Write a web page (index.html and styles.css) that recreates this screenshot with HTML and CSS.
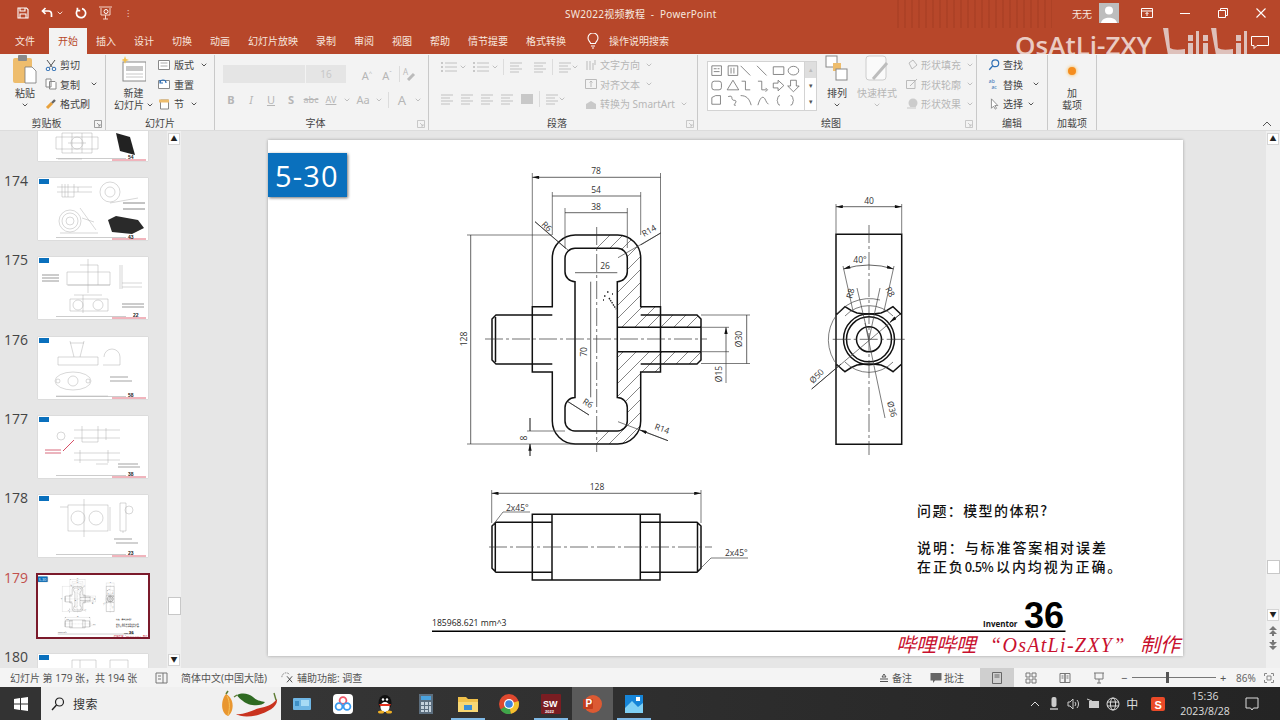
FILE: index.html
```html
<!DOCTYPE html>
<html lang="zh-CN">
<head>
<meta charset="utf-8">
<title>SW2022视频教程 - PowerPoint</title>
<link rel="stylesheet" href="styles.css">
</head>
<body>
<svg class="defs" width="0" height="0">
  <defs>
    <marker id="arr" viewBox="0 0 8 4" refX="8" refY="2" markerWidth="8" markerHeight="3.4" orient="auto-start-reverse" markerUnits="userSpaceOnUse"><path d="M0 0L8 2L0 4z" fill="#111"/></marker>
    <pattern id="hatch" width="13" height="13" patternUnits="userSpaceOnUse"><path d="M-1 14L14 -1" stroke="#333" stroke-width=".6"/></pattern>
    <symbol id="chev" viewBox="0 0 6 4"><path d="M.7 .7L3 3L5.3 .7" fill="none" stroke="currentColor" stroke-width="1"/></symbol>
    <symbol id="launch" viewBox="0 0 8 8"><path d="M.5 .5H7.5V7.5H.5ZM3 3L6 6M6 4V6H4" fill="none" stroke="#888" stroke-width=".8"/></symbol>
    <symbol id="bul" viewBox="0 0 20 12"><path d="M1 2h2M1 6h2M1 10h2" stroke="#bbb" stroke-width="1.4"/><path d="M5 2H17M5 6H17M5 10H17" stroke="#c2c2c2" stroke-width="1"/></symbol>
    <symbol id="alg" viewBox="0 0 14 12"><path d="M1 2H13M1 5H10M1 8H13M1 11H10" stroke="#c2c2c2" stroke-width="1.2"/></symbol>
    <g id="sheet">
      <rect x="268" y="140" width="915" height="516" fill="#fff"/>
      <rect class="badge-r" x="268" y="153" width="79" height="44" fill="#0a70bd"/>
      <text class="badge-t" x="275" y="187">5-30</text>

      <!-- front section -->
      <path fill="url(#hatch)" d="M597 235H617.7A23 23 0 0 1 640.7 258V306.7H660.5V315H697L701 319V327.3H617.3V281.7A10 10 0 0 0 627.3 271.7V258.3A10 10 0 0 0 617.3 248.3H597Z"/>
      <path fill="url(#hatch)" d="M597 444H617.7A23 23 0 0 0 640.7 421V372H660.5V364H697L701 360V351.7H617.3V397.6A10 10 0 0 1 627.3 407.6V421A10 10 0 0 1 617.3 431H597Z"/>
      <path class="thick" d="M552.3 258A23 23 0 0 1 575.3 235H617.7A23 23 0 0 1 640.7 258V306.7H660.5V315H697L701 319V360L697 364H660.5V372H640.7V421A23 23 0 0 1 617.7 444H575.3A23 23 0 0 1 552.3 421V372H532.3V364H496L492 360V319L496 315H532.3V306.7H552.3Z"/>
      <path class="thick" d="M565 258.3A10 10 0 0 1 575 248.3H617.3A10 10 0 0 1 627.3 258.3V271.7A10 10 0 0 1 617.3 281.7V397.6A10 10 0 0 1 627.3 407.6V421A10 10 0 0 1 617.3 431H575A10 10 0 0 1 565 421V407.6A10 10 0 0 1 575 397.6V281.7A10 10 0 0 1 565 271.7Z"/>
      <path class="thick" d="M617.3 327.3H701M617.3 351.7H701M532.3 315V364M532.3 315H552.3M532.3 364H552.3M640.7 315H660.5M640.7 364H660.5M660.5 315V364M495.5 317V362"/>
      <path class="center" d="M485 339H707M596.7 227V452"/>
      <!-- front dimensions -->
      <path class="thin" d="M532.3 173V306M660.5 173V306M552.3 192V235M640.7 192V235M565 208V248M627.3 208V248M467 235H552M467 444H575M701 315H750M701 363.5H750M701 327.3H729M701 351.7H729M527 431H565"/>
      <path class="dim" d="M532.3 177.3H660.5M552.3 196H640.7M565 212.7H627.3M470.7 235V444M575 272.7H617.3M590.7 281.7V397.3M746.7 315V363.5M726 351.7V327.3"/>
      <path class="thin" d="M726 351.7V383M530 418V431M530 444V456"/>
      <path class="thin" d="M535 221.7L568 250M618 257.7L660.7 233M589 415L568 401.7M618 421.7L668 440.7"/>
      <path class="dim-e" d="M535 221.7L566 248.7M660.7 233L640.7 245M589 415L568 401.7M668 440.7L640 430"/>
      <path class="dim-e" d="M530 418V431M530 456V444"/>
      <text class="dt" x="596" y="174" text-anchor="middle">78</text>
      <text class="dt" x="596" y="193" text-anchor="middle">54</text>
      <text class="dt" x="596" y="209.5" text-anchor="middle">38</text>
      <text class="dt" x="605" y="269" text-anchor="middle">26</text>
      <text class="dt" transform="translate(467 339) rotate(-90)" text-anchor="middle">128</text>
      <text class="dt" transform="translate(587 352) rotate(-90)" text-anchor="middle">70</text>
      <text class="dt" transform="translate(742 339) rotate(-90)" text-anchor="middle">Ø30</text>
      <text class="dt" transform="translate(722 374) rotate(-90)" text-anchor="middle">Ø15</text>
      <text class="dt" transform="translate(527 438) rotate(-90)" text-anchor="middle">8</text>
      <text class="dt" transform="translate(541 225) rotate(45)">R6</text>
      <text class="dt" transform="translate(644 237) rotate(-30)">R14</text>
      <text class="dt" transform="translate(582 403) rotate(33)">R6</text>
      <text class="dt" transform="translate(654 429) rotate(20)">R14</text>
      <!-- busy cursor -->
      <path d="M609 298l7 11M604 296h1.5M607 292h1.5M612 294h1M603 300h1" stroke="#222" stroke-width="1.4" stroke-dasharray="1.5 1"/>

      <!-- side view -->
      <path class="thick" d="M836 234.3H901.7V444.3H836ZM836 315L845 306.7Q851 311 857 313Q869 315 881 313Q887 311 893 306.7L901.7 315M836 364L845 371.7Q851 367 857 365Q869 363 881 365Q887 367 893 371.7L901.7 364"/>
      <circle class="thick" cx="869" cy="339.3" r="12.5"/>
      <circle class="thick" cx="869" cy="339.3" r="22.5"/>
      <circle class="thick" cx="869" cy="339.3" r="25.5"/>
      <path class="thin" d="M845 316A33 33 0 0 1 893 316M893 362A33 33 0 0 1 845 362M880 300A41 41 0 0 0 843 371M836 204V234M901.7 204V234"/>
      <path class="center" d="M869 225V455M832.7 339.3H907.3"/>
      <path class="dim" d="M836 206.7H901.7"/>
      <path class="thin" d="M843 266L853 311M894 266L884 311M857 288L869 339M880 288L869 339M811.7 389L900 314.3M865 323L885 418"/>
      <path class="dim" d="M843.5 269Q869 261 893.5 269"/>
      <path class="dim-e" d="M811.7 389L841 364M900 314.3L890 322"/>
      <text class="dt" x="869" y="203.5" text-anchor="middle">40</text>
      <text class="dt" x="860" y="262.5" text-anchor="middle">40°</text>
      <text class="dt" transform="translate(852 299) rotate(-75)">R8</text>
      <text class="dt" transform="translate(885 289) rotate(60)">R8</text>
      <text class="dt" transform="translate(813 384) rotate(-45)">Ø50</text>
      <text class="dt" transform="translate(887 402) rotate(75)">Ø36</text>

      <!-- bottom view -->
      <path class="thick" d="M532.3 514.3H660V580H532.3ZM552 514.3V580M640.3 514.3V580M532.3 522.3H552M532.3 572.3H552M640.3 522.3H660M640.3 572.3H660M532.3 522.3H496L492 526V568.3L496 572.3H532.3M660 522.3H697L701 526V568.3L697 572.3H660M495.3 522.3V572.3M697.5 522.3V572.3"/>
      <path class="center" d="M489 547H712"/>
      <path class="thin" d="M491.7 490V523M701 490V523M493 525L503 512H530M699 570L711 558H748"/>
      <path class="dim" d="M491.7 493.3H701"/>
      <text class="dt" x="597" y="490" text-anchor="middle">128</text>
      <text class="dt" x="506" y="510.5">2x45°</text>
      <text class="dt" x="725" y="555.5">2x45°</text>

      <!-- texts -->
      <text class="q" x="917" y="516">问题：模型的体积?</text>
      <text class="q wide" x="917" y="553">说明：与标准答案相对误差</text>
      <text class="q wide" x="917" y="572">在正负<tspan class="pct">0.5%</tspan><tspan x="996">以内均视为正确。</tspan></text>
      <text class="vol" x="432" y="626">185968.621 mm^3</text>
      <path d="M432 631.3H1065.5" stroke="#000" stroke-width="1.6"/>
      <text class="inv" x="983" y="627">Inventor</text>
      <text class="score" x="1024" y="628">36</text>
      <text class="red" y="652"><tspan x="896">哔哩哔哩</tspan><tspan class="red-l" x="990">“OsAtLi-ZXY”</tspan><tspan x="1140">制作</tspan></text>
    </g>
    <g id="base">
      <rect x="1" y="1" width="10" height="5" fill="#0a70bd"/>
      <path d="M18 59.5H88" stroke="#999" stroke-width=".5"/>
      <path d="M74 61H108" stroke="#e26a7a" stroke-width="1"/>
    </g>
  </defs>
</svg>

<header class="titlebar">
  <div class="qat">
    <svg class="ico12" viewBox="0 0 12 12"><path d="M1 1H9.5L11 2.5V11H1ZM3 1V4H8V1M3 11V7H9V11" fill="none" stroke="#fff" stroke-width="1.1"/></svg>
    <svg class="ico12 qa-g" viewBox="0 0 12 12"><path d="M4.5 1L1.5 4L4.5 7M2 4H7.5A3 3 0 0 1 10.5 7V10" fill="none" stroke="#fff" stroke-width="1.7"/></svg>
    <svg class="chev qa-s" viewBox="0 0 6 4"><use href="#chev"/></svg>
    <svg class="ico12 qa-g" viewBox="0 0 12 12"><path d="M7 1.6A4.6 4.6 0 1 1 3 2.6M2.4 .8V3.6H5.2" fill="none" stroke="#fff" stroke-width="1.7"/></svg>
    <svg class="ico14 qa-g" viewBox="0 0 14 14"><path d="M0 1H13M2 2V9H11V2M6.5 9V13M4 13H9" fill="none" stroke="#f5d5c8" stroke-width="1"/><circle cx="7" cy="5.5" r="2" fill="none" stroke="#fff"/></svg>
    <span class="qa-dots">⁝</span>
  </div>
  <div class="doc-title">SW2022视频教程 &nbsp;-&nbsp; PowerPoint</div>
  <div class="stripes"></div>
  <div class="winbar">
    <span class="user">无无</span>
    <svg class="avatar" viewBox="0 0 20 20"><rect width="20" height="20" fill="#bdbdbd"/><circle cx="10" cy="7.5" r="4" fill="#fff"/><path d="M2 20C3 13 17 13 18 20Z" fill="#fff"/></svg>
    <div class="wbtn"><svg class="ico12" viewBox="0 0 12 12"><path d="M.5 1.5H11.5V10.5H.5ZM.5 4H11.5M6 9V5.5M4.5 7L6 5.5L7.5 7" fill="none" stroke="#fff"/></svg></div>
    <div class="wbtn"><svg class="ico12" viewBox="0 0 12 12"><path d="M1 6.5H11" stroke="#fff"/></svg></div>
    <div class="wbtn"><svg class="ico12" viewBox="0 0 12 12"><path d="M1.5 3.5H8.5V10.5H1.5ZM3.5 3.5V1.5H10.5V8.5H8.5" fill="none" stroke="#fff"/></svg></div>
    <div class="wbtn"><svg class="ico12" viewBox="0 0 12 12"><path d="M1.5 1.5L10.5 10.5M10.5 1.5L1.5 10.5" stroke="#fff" stroke-width="1.1"/></svg></div>
  </div>
</header>

<nav class="tabs">
  <span class="tab file">文件</span>
  <span class="tab active">开始</span>
  <span class="tab">插入</span>
  <span class="tab">设计</span>
  <span class="tab">切换</span>
  <span class="tab">动画</span>
  <span class="tab">幻灯片放映</span>
  <span class="tab">录制</span>
  <span class="tab">审阅</span>
  <span class="tab">视图</span>
  <span class="tab">帮助</span>
  <span class="tab">情节提要</span>
  <span class="tab">格式转换</span>
  <svg class="bulb" viewBox="0 0 12 16"><path d="M3.6 10.5C3.2 8.5 1 7.6 1 5A5 5 0 0 1 11 5C11 7.6 8.8 8.5 8.4 10.5ZM4 13H8M5 15H7" fill="none" stroke="#fff" stroke-width="1.1"/></svg>
  <span class="tell">操作说明搜索</span>
  <div class="wm">OsAtLi-ZXY</div>
  <svg class="wm-logo" viewBox="0 0 100 30"><g fill="#e6dcdc" fill-opacity=".82"><path d="M3 3L8 0L10 23Q14 26 25 24V30H8ZM51 3L56 0L58 23Q62 26 73 24V30H56Z"/><path d="M28 10H33V16H28ZM28 18H33V30H28ZM36 6H39V30H36ZM43 10H48V16H43ZM43 18H48V30H43ZM76 10H81V16H76ZM76 18H81V30H76ZM84 6H87V30H84Z"/></g></svg>
  <svg class="comment" viewBox="0 0 18 13"><path d="M.5 .5H17.5V9.5H6L3 12.5V9.5H.5Z" fill="none" stroke="#fff"/></svg>
</nav>

<section class="ribbon">
  <div class="grp g-clip">
    <div class="body">
      <div class="big bw24">
        <svg class="bigico" viewBox="0 0 24 32"><rect x="0" y="3" width="19" height="25" rx="2" fill="#eebd6d"/><rect x="5" y="0" width="9" height="6" rx="1" fill="#8a8a8a"/><path d="M12 12H19L23 16V28H12Z" fill="#fff" stroke="#777" stroke-width=".8"/></svg>
        <span>粘贴</span>
        <svg class="chev mt" viewBox="0 0 6 4"><use href="#chev"/></svg>
      </div>
      <div class="col col-clip">
        <div class="row"><svg class="ico12" viewBox="0 0 12 12"><path d="M2 1L7.5 8.5M10 1L4.5 8.5" stroke="#555" fill="none"/><circle cx="3" cy="10" r="1.8" fill="none" stroke="#2f6fb5"/><circle cx="9" cy="10" r="1.8" fill="none" stroke="#2f6fb5"/></svg><span>剪切</span></div>
        <div class="row"><svg class="ico12" viewBox="0 0 12 12"><path d="M1 1H6V9H1ZM4.5 3.5H10L11 4.5V11H4.5Z" fill="#fff" stroke="#888"/></svg><span>复制</span><svg class="chev ml8" viewBox="0 0 6 4"><use href="#chev"/></svg></div>
        <div class="row"><svg class="ico12" viewBox="0 0 12 12"><path d="M2 10L7 5" stroke="#e8a13c" stroke-width="3"/><path d="M7 5L10 2" stroke="#666" stroke-width="2.4"/></svg><span>格式刷</span></div>
      </div>
    </div>
    <div class="lbl lp">剪贴板</div>
    <svg class="launcher" viewBox="0 0 8 8"><use href="#launch"/></svg>
  </div>

  <div class="grp g-slide">
    <div class="body">
      <div class="big bw39">
        <svg class="bigico new" viewBox="0 0 24 32"><rect x="1" y="7" width="23" height="19" fill="#fff" stroke="#888"/><rect x="4" y="11" width="17" height="5" fill="#c8c8c8"/><path d="M4 19H21M4 22H21" stroke="#c8c8c8"/><path d="M3 1L4 4L7 5L4 6L3 9L2 6L-1 5L2 4Z" fill="#f2c14e"/></svg>
        <span>新建</span>
        <span class="nw">幻灯片 <svg class="chev" viewBox="0 0 6 4"><use href="#chev"/></svg></span>
      </div>
      <div class="col col-slide">
        <div class="row rg4"><svg class="ico12" viewBox="0 0 12 12"><path d="M.5 1.5H11.5V10.5H.5Z" fill="#fff" stroke="#888"/><path d="M2.5 4H9.5M2.5 7H9.5" stroke="#aaa"/></svg><span>版式</span><svg class="chev ml3" viewBox="0 0 6 4"><use href="#chev"/></svg></div>
        <div class="row rg4"><svg class="ico12" viewBox="0 0 12 12"><path d="M.5 2.5H11.5V10.5H.5Z" fill="#fff" stroke="#888"/><path d="M2 5A3 3 0 0 1 8 5M2 2V5H5" fill="none" stroke="#2f6fb5" stroke-width="1.2"/></svg><span>重置</span></div>
        <div class="row rg4"><svg class="ico12" viewBox="0 0 12 12"><path d="M2.5 2H10.5V11H2.5Z" fill="#fff" stroke="#888"/><path d="M1 1.5H11V4.5H1Z" fill="#eebd6d"/></svg><span>节</span><svg class="chev ml3" viewBox="0 0 6 4"><use href="#chev"/></svg></div>
      </div>
    </div>
    <div class="lbl">幻灯片</div>
  </div>

  <div class="grp g-font">
    <div class="body stack dis">
      <div class="frow">
        <div class="combo name"></div>
        <div class="combo size"><span>16</span></div>
        <span class="cell cell-a">A<sup>^</sup></span>
        <span class="cell">A<sup>ˇ</sup></span>
        <span class="vsep vs-a"></span>
        <svg class="ico14" viewBox="0 0 14 14"><text class="tiny" x="1" y="8">A</text><path d="M6 13L12 7" stroke="#bbb" stroke-width="3"/></svg>
      </div>
      <div class="frow frow2">
        <b class="cell">B</b><i class="cell">I</i><span class="cell u">U</span><b class="cell">S</b><span class="cell sm"><s>abc</s></span><span class="cell sm u">AV</span>
        <svg class="chev cellc" viewBox="0 0 6 4"><use href="#chev"/></svg>
        <span class="cell">Aa</span>
        <svg class="chev cellc" viewBox="0 0 6 4"><use href="#chev"/></svg>
        <span class="vsep"></span>
        <span class="cell big-a">A</span>
        <svg class="chev cellc" viewBox="0 0 6 4"><use href="#chev"/></svg>
      </div>
    </div>
    <div class="lbl lp">字体</div>
    <svg class="launcher dim-l" viewBox="0 0 8 8"><use href="#launch"/></svg>
  </div>

  <div class="grp g-para">
    <div class="body dis">
      <div class="stack pcol">
        <div class="frow">
          <svg class="icl" viewBox="0 0 20 12"><use href="#bul"/></svg><svg class="chev" viewBox="0 0 6 4"><use href="#chev"/></svg>
          <svg class="icl ml6" viewBox="0 0 20 12"><use href="#bul"/></svg><svg class="chev" viewBox="0 0 6 4"><use href="#chev"/></svg>
          <span class="vsep ms"></span>
          <svg class="ic14" viewBox="0 0 14 12"><use href="#alg"/></svg>
          <svg class="ic14 ml10" viewBox="0 0 14 12"><use href="#alg"/></svg>
          <span class="vsep ms"></span>
          <svg class="ic14" viewBox="0 0 14 12"><use href="#alg"/></svg><svg class="chev" viewBox="0 0 6 4"><use href="#chev"/></svg>
        </div>
        <div class="frow frow2">
          <svg class="ic14" viewBox="0 0 14 12"><use href="#alg"/></svg>
          <svg class="ic14 ml6" viewBox="0 0 14 12"><use href="#alg"/></svg>
          <svg class="ic14 ml6" viewBox="0 0 14 12"><use href="#alg"/></svg>
          <svg class="ic14 ml6" viewBox="0 0 14 12"><use href="#alg"/></svg>
          <svg class="ic14 ml6" viewBox="0 0 14 12"><rect x="1" y="1" width="12" height="10" fill="#c8c8c8"/></svg>
          <span class="vsep ms"></span>
          <svg class="ic14" viewBox="0 0 14 12"><use href="#alg"/></svg><svg class="chev" viewBox="0 0 6 4"><use href="#chev"/></svg>
        </div>
      </div>
      <div class="col col-para">
        <div class="row"><svg class="ico12" viewBox="0 0 12 12"><path d="M2 2V11M5 2V11M8 4V11M10 1V6" stroke="#bbb" fill="none"/></svg><span>文字方向</span><svg class="chev ml3" viewBox="0 0 6 4"><use href="#chev"/></svg></div>
        <div class="row"><svg class="ico12" viewBox="0 0 12 12"><path d="M.5 1.5H11.5V10.5H.5ZM6 3V9M4.5 4.5L6 3L7.5 4.5" fill="none" stroke="#bbb"/></svg><span>对齐文本</span><svg class="chev ml3" viewBox="0 0 6 4"><use href="#chev"/></svg></div>
        <div class="row"><svg class="ico12" viewBox="0 0 12 12"><path d="M1 6L6 3L11 6V11H1Z" fill="#c9c9c9"/></svg><span>转换为 SmartArt</span><svg class="chev ml3" viewBox="0 0 6 4"><use href="#chev"/></svg></div>
      </div>
    </div>
    <div class="lbl lp">段落</div>
    <svg class="launcher dim-l" viewBox="0 0 8 8"><use href="#launch"/></svg>
  </div>

  <div class="grp g-draw">
    <div class="body">
      <div class="gallery">
        <svg class="shapes" viewBox="0 0 96 50">
          <g fill="none" stroke="#666" stroke-width=".8">
            <path d="M2 4H12V14H2ZM4 7H7M4 10H10M8 7H10"/>
            <path d="M19 4H29V14H19ZM22 6V12M25 6V12"/>
            <path d="M32 4L42 14M49 4L59 14"/>
            <path d="M66 5H77V13H66Z"/>
            <ellipse cx="87" cy="9" rx="5.5" ry="4.5"/>
            <rect x="2" y="20" width="10" height="9" rx="2.5"/>
            <path d="M24 19L30 29H18Z"/>
            <path d="M33 20H37V29H42M50 20H54V29H59M58 27L60 29L58 31"/>
            <path d="M66 22H71V19L77 24.5L71 30V27H66Z"/>
            <path d="M84 19H90V25H93L87 31L81 25H84Z"/>
            <path d="M2 44V37L6 35H11V44ZM19 36C26 34 20 40 26 40C30 41 22 46 27 45"/>
            <path d="M32 35C38 35 41 38 43 45M50 45C52 38 54 36 56 37C58 38 58 42 61 44"/>
            <path d="M73 35C70 35 71 39 70 40C71 41 70 45 73 45M84 35C87 35 86 39 87 40C86 41 87 45 84 45"/>
          </g>
        </svg>
        <div class="gal-scroll">
          <span class="gs up">▴</span><span class="gs">▾</span><span class="gs">▾</span>
        </div>
      </div>
      <div class="big bw24 ml8">
        <svg class="bigico" viewBox="0 0 24 32"><rect x="1" y="1" width="11" height="11" fill="#fff" stroke="#888"/><rect x="8" y="8" width="8" height="8" fill="#eebd6d"/><rect x="11" y="14" width="11" height="11" fill="#fff" stroke="#888"/></svg>
        <span>排列</span>
        <svg class="chev mt" viewBox="0 0 6 4"><use href="#chev"/></svg>
      </div>
      <div class="big bw40 ml8 dis">
        <svg class="bigico" viewBox="0 0 24 32"><rect x="1" y="1" width="20" height="24" rx="3" fill="#fafafa" stroke="#ccc"/><path d="M8 24L22 8" stroke="#bdbdbd" stroke-width="3"/></svg>
        <span>快速样式</span>
        <svg class="chev mt" viewBox="0 0 6 4"><use href="#chev"/></svg>
      </div>
      <div class="col col-draw dis">
        <div class="row"><svg class="ico12" viewBox="0 0 12 12"><path d="M3 4L7 1L11 6L6 10Z" fill="none" stroke="#bbb"/></svg><span>形状填充</span><svg class="chev ml3" viewBox="0 0 6 4"><use href="#chev"/></svg></div>
        <div class="row"><svg class="ico12" viewBox="0 0 12 12"><path d="M.5 2.5H9V10.5H.5ZM4 8L11 1" fill="none" stroke="#bbb"/></svg><span>形状轮廓</span><svg class="chev ml3" viewBox="0 0 6 4"><use href="#chev"/></svg></div>
        <div class="row"><svg class="ico12" viewBox="0 0 12 12"><circle cx="7" cy="5" r="4.5" fill="#ccc"/><path d="M1 9H10V11H1Z" fill="#ddd"/></svg><span>形状效果</span><svg class="chev ml3" viewBox="0 0 6 4"><use href="#chev"/></svg></div>
      </div>
    </div>
    <div class="lbl lp">绘图</div>
    <svg class="launcher dim-l" viewBox="0 0 8 8"><use href="#launch"/></svg>
  </div>

  <div class="grp g-edit">
    <div class="body col-edit">
      <div class="row rg2"><svg class="ic14" viewBox="0 0 14 14"><circle cx="8.5" cy="5" r="4" fill="none" stroke="#2f6fb5" stroke-width="1.4"/><path d="M5.5 8L1.5 12.5" stroke="#2f6fb5" stroke-width="1.6"/></svg><span>查找</span></div>
      <div class="row rg2"><svg class="ic14" viewBox="0 0 14 14"><text class="ab" x="1" y="6">ab</text><text class="ab" x="4" y="13">ac</text></svg><span>替换</span><svg class="chev ml8" viewBox="0 0 6 4"><use href="#chev"/></svg></div>
      <div class="row rg2"><svg class="ic14" viewBox="0 0 14 14"><path d="M4 1V12L6.5 9.5L8.5 13L10 12L8 8.8H11.5Z" fill="#fff" stroke="#777" stroke-width=".9"/></svg><span>选择</span><svg class="chev ml3" viewBox="0 0 6 4"><use href="#chev"/></svg></div>
    </div>
    <div class="lbl">编辑</div>
  </div>

  <div class="grp g-add">
    <div class="body addin">
      <span class="dot"></span>
      <span>加</span>
      <span>载项</span>
    </div>
    <div class="lbl">加载项</div>
  </div>

  <div class="rtail"><svg class="collapse" viewBox="0 0 10 6"><path d="M1 5L5 1L9 5" fill="none" stroke="#555"/></svg></div>
</section>

<main class="workspace">
  <aside class="pane">
    <ol class="thumbs">
      <li class="titem"><span class="num"></span><svg class="thumb" viewBox="0 0 110 62"><use href="#base"/><g class="mini"><path d="M18 38H60V50H18ZM24 34H54V54H24ZM30 44H48M34 34V54M44 34V54"/><circle cx="39" cy="44" r="6"/><path d="M20 60H44"/></g><path d="M78 34L92 38L97 56L82 52Z" fill="#222"/><text class="tn" x="90" y="60">54</text></svg></li>
      <li class="titem"><span class="num">174</span><svg class="thumb" viewBox="0 0 110 62"><use href="#base"/><g class="mini"><path d="M19 9H54M19 14H54M24 6V19H36V6M40 9V14M27 6V19M30 6V19"/><circle cx="72" cy="14" r="10"/><circle cx="72" cy="14" r="5"/><path d="M72 25L100 20"/><circle cx="32" cy="43" r="11"/><circle cx="32" cy="43" r="4"/><circle cx="32" cy="43" r="8"/><path d="M44 40L56 44M22 55H60M42 30L58 52"/></g><path d="M85 25h22M85 31h22" stroke="#888" stroke-width="1"/><path d="M70 42L78 38L100 42L106 50L94 56L74 54Z" fill="#2a2a2a"/><text class="tn" x="90" y="61">43</text></svg></li>
      <li class="titem"><span class="num">175</span><svg class="thumb" viewBox="0 0 110 62"><use href="#base"/><g class="mini"><path d="M29 15H72V28H29ZM42 8H60V28M30 28H72M45 38V56M32 42H70V54H32ZM36 38H64M50 2V36M82 8V32M84 8V32M84 26H104M84 30H104"/><circle cx="40" cy="48" r="5"/><circle cx="60" cy="48" r="5"/></g><path d="M4 18H21M4 21H21M4 24H21" stroke="#999" stroke-width="1"/><path d="M84 47h22M84 50h22" stroke="#999" stroke-width="1"/><text class="tn" x="95" y="60">22</text></svg></li>
      <li class="titem"><span class="num">176</span><svg class="thumb" viewBox="0 0 110 62"><use href="#base"/><g class="mini"><path d="M20 28H60V20H20ZM32 4L36 20M46 4L42 20M32 6L46 6M65 28H82V20M66 20A8 8 0 0 1 82 20"/><ellipse cx="35" cy="44" rx="18" ry="9"/><circle cx="35" cy="44" r="5"/><circle cx="20" cy="44" r="2"/><circle cx="50" cy="44" r="2"/><path d="M18 59H70"/></g><path d="M72 40h18M72 44h22" stroke="#999" stroke-width=".9"/><text class="tn" x="90" y="60">58</text></svg></li>
      <li class="titem"><span class="num">177</span><svg class="thumb" viewBox="0 0 110 62"><use href="#base"/><g class="mini"><path d="M36 14H82M36 22H82M44 10V26H60V10M68 12V24M36 37H82M36 44H82M42 34V47M70 34V47M58 48H70"/><circle cx="23" cy="20" r="4"/></g><path d="M25 35L36 24" stroke="#d23b55" stroke-width=".9"/><path d="M7 34H23M7 37H23" stroke="#d86a7c" stroke-width="1"/><path d="M80 48h20M80 51h22" stroke="#999" stroke-width=".9"/><text class="tn" x="90" y="60">38</text></svg></li>
      <li class="titem"><span class="num">178</span><svg class="thumb" viewBox="0 0 110 62"><use href="#base"/><g class="mini"><rect x="30" y="10" width="40" height="26"/><circle cx="40" cy="23" r="7"/><circle cx="58" cy="23" r="7"/><path d="M22 12H30M72 12V36M46 4V42M82 8H88V36H82ZM85 36V38"/><circle cx="91" cy="15" r="4"/></g><path d="M76 44h18M78 48h22" stroke="#999" stroke-width=".9"/><text class="tn" x="90" y="60">23</text></svg></li>
      <li class="titem current"><span class="num">179</span><svg class="thumb" viewBox="268 140 915 516"><use href="#sheet"/></svg></li>
      <li class="titem"><span class="num">180</span><svg class="thumb" viewBox="0 0 110 62"><use href="#base"/><g class="mini"><path d="M34 6H58V24H34ZM72 6H90V24H72ZM42 6V24"/></g></svg></li>
    </ol>
  </aside>
  <div class="vscroll left">
    <span class="sbtn">▲</span>
    <span class="sthumb st-left"></span>
    <span class="sbtn end">▼</span>
  </div>
  <div class="editor">
    <svg class="slide" viewBox="268 140 915 516" role="img" aria-label="幻灯片 179"><use href="#sheet"/></svg>
  </div>
  <div class="vscroll right">
    <span class="sbtn">▲</span>
    <span class="sthumb st-right"></span>
    <span class="sbtn end">▼</span>
    <svg class="nav" viewBox="0 0 10 10"><path d="M5 0L9 4H1ZM5 4L9 8H6V10H4V8H1Z" fill="#777"/></svg>
    <svg class="nav" viewBox="0 0 10 10"><path d="M5 10L9 6H1ZM5 6L9 2H6V0H4V2H1Z" fill="#777"/></svg>
  </div>
</main>

<footer class="status">
  <span class="s-count">幻灯片 第 179 张，共 194 张</span>
  <svg class="ic14 s-notes" viewBox="0 0 14 12"><path d="M1 1H12V11H1ZM8 1V11M3 4H6M3 7H6" fill="none" stroke="#777"/></svg>
  <span class="s-lang">简体中文(中国大陆)</span>
  <svg class="ic14 s-acc" viewBox="0 0 14 14"><path d="M1 6A5 5 0 0 1 10 3" fill="none" stroke="#777" stroke-dasharray="2 1"/><path d="M7 5L13 12M13 5L7 12" stroke="#333"/></svg>
  <span class="s-a">辅助功能: 调查</span>
  <div class="s-right">
    <svg class="ico10" viewBox="0 0 10 10"><path d="M5 1L7 4H3ZM1 6H9M1 8.5H9" fill="none" stroke="#555"/></svg>
    <span class="s-t">备注</span>
    <svg class="ico12 s-c" viewBox="0 0 12 12"><path d="M.5 1H11.5V8.5H5L3 11V8.5H.5Z" fill="#666"/></svg>
    <span class="s-t2">批注</span>
    <span class="view on"><svg class="ico12" viewBox="0 0 12 12"><path d="M1.5 .5H10.5V11.5H1.5ZM3.5 3H8.5M3.5 5H8.5" fill="none" stroke="#666"/></svg></span>
    <span class="view"><svg class="ico12" viewBox="0 0 12 12"><path d="M1 1H5V5H1ZM7 1H11V5H7ZM1 7H5V11H1ZM7 7H11V11H7Z" fill="none" stroke="#777"/></svg></span>
    <span class="view"><svg class="ico12" viewBox="0 0 12 12"><path d="M1 1.5H6V10.5H1ZM6 1.5H11V10.5H6ZM2.5 4H4.5M7.5 4H9.5M2.5 6H4.5M7.5 6H9.5" fill="none" stroke="#777"/></svg></span>
    <span class="view"><svg class="ico12" viewBox="0 0 12 12"><path d="M1 1H11M2 1V7H10V1M6 7V11M4 11H8" fill="none" stroke="#777"/></svg></span>
    <span class="zminus">−</span>
    <div class="zoomtrack"><span class="zthumb"></span></div>
    <span class="zplus">+</span>
    <span class="zpct">86%</span>
    <svg class="ico10 zfit" viewBox="0 0 10 10"><path d="M.5 3V.5H3M7 .5H9.5V3M9.5 7V9.5H7M3 9.5H.5V7M3 3H7V7H3Z" fill="none" stroke="#888"/></svg>
  </div>
</footer>

<div class="taskbar">
  <div class="start"><svg class="win" viewBox="0 0 14 14"><path d="M0 2L6 1V6.5H0ZM7 .9L14 0V6.5H7ZM0 7.5H6V13L0 12ZM7 7.5H14V14L7 13Z" fill="#fff"/></svg></div>
  <div class="search">
    <svg class="mag" viewBox="0 0 14 14"><circle cx="8.5" cy="5" r="4" fill="none" stroke="#222" stroke-width="1.2"/><path d="M5.5 8L1 13" stroke="#222" stroke-width="1.4"/></svg>
    <span>搜索</span>
    <svg class="pepper" viewBox="0 0 60 30"><path d="M6 5C1 10 0 24 8 27C14 23 15 10 6 5Z" fill="#e9962f"/><path d="M7 7C10 12 10 20 8 26" fill="none" stroke="#f7c35a"/><path d="M6 5L8 2" stroke="#5d7c34" stroke-width="1.5"/><path d="M17 6C23 3 29 5 33 8C37 12 42 12 45 13C42 18 28 17 23 12C20 10 18 8 17 6Z" fill="#2f6a22"/><path d="M17 6L14 8" stroke="#5d7c34" stroke-width="1.4"/><path d="M57 10C58 18 48 23 38 26C30 28 20 28 16 25C24 26 32 21 40 19C46 18 52 16 56 11Z" fill="#c9331f"/><path d="M56 11L54 4" stroke="#5d7c34" stroke-width="1.4" fill="none"/></svg>
  </div>
  <div class="apps">
    <span class="app"><svg class="ico20" viewBox="0 0 20 20"><rect x="1" y="4" width="18" height="12" rx="1" fill="#6fb6e4"/><rect x="9" y="6" width="8" height="6" fill="#a8dbf5"/><rect x="3" y="7" width="4" height="5" fill="#3f8fc4"/></svg></span>
    <span class="app"><svg class="ico20" viewBox="0 0 20 20"><rect width="20" height="20" rx="4" fill="#fff"/><circle cx="10" cy="6.5" r="3.4" fill="none" stroke="#f0596a" stroke-width="1.8"/><circle cx="6" cy="12.5" r="3.4" fill="none" stroke="#3a9bf0" stroke-width="1.8"/><circle cx="14" cy="12.5" r="3.4" fill="none" stroke="#3a9bf0" stroke-width="1.8"/></svg></span>
    <span class="app"><svg class="ico20" viewBox="0 0 20 20"><ellipse cx="10" cy="9" rx="6.5" ry="8" fill="#111"/><ellipse cx="10" cy="13" rx="4.6" ry="5" fill="#fff"/><path d="M4 10H16L15 12H5Z" fill="#e0301e"/><ellipse cx="6" cy="18" rx="3" ry="1.5" fill="#f0b024"/><ellipse cx="14" cy="18" rx="3" ry="1.5" fill="#f0b024"/><circle cx="8" cy="5.5" r="1.2" fill="#fff"/><circle cx="12" cy="5.5" r="1.2" fill="#fff"/></svg></span>
    <span class="app"><svg class="ico20" viewBox="0 0 20 20"><rect x="3" y="0" width="14" height="20" fill="#5c6e7e"/><rect x="5" y="2" width="10" height="4" fill="#4aa3df"/><path d="M5 8H8V11H5ZM9 8H12V11H9ZM13 8H15V11H13ZM5 12H8V15H5ZM9 12H12V15H9ZM13 12H15V18H13ZM5 16H8V18H5ZM9 16H12V18H9Z" fill="#c5d2dc"/></svg></span>
    <span class="app lit"><svg class="ico20" viewBox="0 0 20 20"><path d="M0 3H8L10 5H20V18H0Z" fill="#f0c04a"/><path d="M0 8H20V18H0Z" fill="#f7d774"/><rect x="6" y="11" width="8" height="5" fill="#3a8fd8"/></svg></span>
    <span class="app"><svg class="ico20" viewBox="0 0 20 20"><circle cx="10" cy="10" r="10" fill="#e0492f"/><path d="M10 10L1.5 15.5A10 10 0 0 0 12 19.8Z" fill="#3fa64a"/><path d="M10 10L12 19.8A10 10 0 0 0 19.5 7Z" fill="#f4c22e"/><circle cx="10" cy="10" r="5" fill="#fff"/><circle cx="10" cy="10" r="3.8" fill="#3d84e0"/></svg></span>
    <span class="app lit"><svg class="ico20" viewBox="0 0 20 20"><rect width="20" height="20" rx="1" fill="#7a1d22"/><text class="sw" x="2" y="13">SW</text><text class="sw2" x="4" y="19">2022</text></svg></span>
    <span class="app act"><svg class="ico20" viewBox="0 0 20 20"><circle cx="11" cy="10" r="9" fill="#dc5a33"/><rect x="1" y="5" width="10" height="10" rx="1" fill="#c43e1c"/><text class="pp" x="3.4" y="13.2">P</text></svg></span>
    <span class="app lit"><svg class="ico20" viewBox="0 0 20 20"><rect x="1" y="1" width="18" height="18" fill="#1685d8"/><path d="M1 19V14L8 7L14 13L19 9V19Z" fill="#7fd0f5"/><rect x="12" y="3" width="4" height="4" fill="#fff"/></svg></span>
  </div>
  <div class="tray">
    <span class="tcell"><svg class="ico10" viewBox="0 0 10 6"><path d="M1 5L5 1L9 5" fill="none" stroke="#ddd"/></svg></span>
    <span class="tcell"><svg class="ico14" viewBox="0 0 14 14"><rect x="4.5" y="0" width="5" height="10" rx="2" fill="#ccc"/><path d="M3 12H11" stroke="#999" stroke-width="2"/></svg></span>
    <span class="tcell"><svg class="ico14" viewBox="0 0 14 14"><path d="M1 5H3L6 2V12L3 9H1Z" fill="none" stroke="#ccc"/><path d="M8 5A3 3 0 0 1 8 9M10 3A6 6 0 0 1 10 11" fill="none" stroke="#ccc"/></svg></span>
    <span class="tcell"><svg class="ico14" viewBox="0 0 14 14"><path d="M3 4H13V11H3Z" fill="#ccc"/><path d="M1 2L6 4" stroke="#ccc"/></svg></span>
    <span class="tcell"><svg class="ico14" viewBox="0 0 14 14"><circle cx="7" cy="7" r="6" fill="none" stroke="#ddd"/><ellipse cx="7" cy="7" rx="2.6" ry="6" fill="none" stroke="#ddd"/><path d="M1 5H13M1 9H13" stroke="#ddd"/></svg></span>
    <span class="tcell ime">中</span>
    <span class="tcell sg"><svg class="ico14" viewBox="0 0 14 14"><rect width="14" height="14" rx="2" fill="#ea4a28"/><text class="sg-s" x="3.4" y="11.5">S</text></svg></span>
    <div class="clock"><span>15:36</span><span>2023/8/28</span></div>
    <span class="notif"><svg class="ico14" viewBox="0 0 14 14"><path d="M1 1H13V11H8.5L7 13L5.5 11H1Z" fill="none" stroke="#ddd"/></svg></span>
  </div>
</div>
</body>
</html>
```
FILE: styles.css
```css
* { box-sizing: border-box; }
html, body { margin: 0; padding: 0; }
body {
  width: 1280px; height: 720px; overflow: hidden;
  display: flex; flex-direction: column;
  font-family: "Noto Sans", "Noto Sans CJK SC", sans-serif;
  font-size: 10px; color: #444; background: #e6e6e6;
}
.defs { position: absolute; }
svg { display: block; flex: none; }
.ico10 { width: 10px; height: 10px; }
.ico12 { width: 12px; height: 12px; }
.ico14 { width: 14px; height: 14px; }
.ic14 { width: 14px; height: 12px; }
.ico20 { width: 20px; height: 20px; }
.icl { width: 20px; height: 12px; }
.chev { width: 6px; height: 4px; color: #555; display: inline-block; }
.ml3 { margin-left: 3px; } .ml6 { margin-left: 6px; } .ml8 { margin-left: 8px; } .ml10 { margin-left: 10px; }
.mt { margin-top: 4px; }

/* title bar */
.titlebar {
  position: relative; height: 28px; flex: none;
  display: flex; align-items: center; padding-bottom: 2px;
  background: #b7472a; color: #fff;
}
.qat { display: flex; align-items: center; width: 565px; padding-left: 17px; }
.qat .chev { color: #f3d6ca; }
.qa-g { margin-left: 12px; }
.qa-s { margin-left: 4px; }
.qa-dots { margin-left: 14px; font-size: 9px; color: #f3d6ca; }
.doc-title { color: #f6e6df; font-size: 10px; letter-spacing: .25px; white-space: nowrap; }
.stripes {
  position: absolute; left: 897px; top: 0; width: 155px; height: 28px; pointer-events: none;
  background: repeating-linear-gradient(90deg, rgba(90,20,0,.10) 0 2px, transparent 2px 7px);
}
.winbar { margin-left: auto; display: flex; align-items: center; }
.user { color: #f6e6df; }
.avatar { width: 20px; height: 20px; margin: 0 9px 0 7px; }
.wbtn { width: 38px; height: 26px; display: flex; align-items: center; justify-content: center; }

/* tabs */
.tabs {
  position: relative; height: 26px; flex: none; overflow: hidden;
  display: flex; align-items: stretch; padding-left: 6px;
  background: #b7472a; color: #f8e6de;
}
.tab { padding: 0 9px; line-height: 26px; white-space: nowrap; }
.tab.file { margin-right: 5px; }
.tab.active { background: #f3f3f3; color: #b7472a; }
.bulb { width: 12px; height: 16px; margin: 5px 0 0 12px; }
.tell { margin-left: 10px; line-height: 26px; }
.wm {
  position: absolute; right: 128px; top: 0; height: 26px; overflow: hidden;
  font-family: "Open Sans", sans-serif; font-weight: 600; font-size: 26px; line-height: 34px;
  color: rgba(255,255,255,.72); white-space: nowrap;
}
.wm-logo { position: absolute; left: 1160px; top: -3px; width: 100px; height: 30px; }
.comment { position: absolute; left: 1251px; top: 8px; width: 18px; height: 13px; }

/* ribbon */
.ribbon {
  height: 77px; flex: none; display: flex;
  background: #f3f3f3; border-bottom: 1px solid #dcdcdc;
}
.grp {
  position: relative; flex: none; height: 75px; margin-top: 1px;
  display: flex; flex-direction: column;
  border-right: 1px solid #c9c9c9;
}
.g-clip { width: 106px; } .g-slide { width: 109px; } .g-font { width: 214px; }
.g-para { width: 269px; } .g-draw { width: 279px; } .g-edit { width: 71px; } .g-add { width: 49px; }
.body { flex: 1; display: flex; padding-top: 0; min-height: 0; }
.lbl { height: 15px; line-height: 16px; text-align: center; color: #444; }
.lp { padding-right: 12px; }
.launcher { position: absolute; right: 3px; bottom: 2px; width: 8px; height: 8px; }
.dim-l { opacity: .5; }
.big { display: flex; flex-direction: column; align-items: center; line-height: 12px; }
.bigico { width: 24px; height: 32px; margin-bottom: 0; }
.bw24 { width: 24px; } .bw39 { width: 39px; } .bw40 { width: 40px; }
.nw { white-space: nowrap; display: inline-flex; align-items: center; gap: 3px; }
.col { display: flex; flex-direction: column; }
.row { height: 19.5px; display: flex; align-items: center; gap: 3px; white-space: nowrap; }
.rg4 { gap: 4px; } .rg2 { gap: 2px; }
.g-clip .body { padding-left: 13px; }
.col-clip { margin-left: 8px; }
.g-slide .body { padding-left: 8px; }
.col-slide { margin-left: 5px; }

.dis { color: #b6b6b6; }
.dis .chev { color: #c0c0c0; }
.stack { flex-direction: column; }
.frow { display: flex; align-items: center; height: 20px; }
.frow2 { margin-top: 12px; }
.g-font .stack { padding: 9px 0 0 8px; }
.g-font .frow:first-child { height: 20px; }
.g-font .frow2 { margin-top: 6px; margin-left: -2px; }
.combo { height: 18px; background: #e5e5e5; }
.combo.name { width: 82px; }
.combo.size { width: 40px; margin-left: 1px; text-align: center; line-height: 18px; color: #c8c8c8; }
.cell { width: 20px; text-align: center; font-size: 11px; line-height: 14px; flex: none; }
.cell-a { margin-left: 11px; }
.cell sup { font-size: 6px; }
.cell.sm { font-size: 9px; }
.cell.big-a { font-size: 13px; }
.u { text-decoration: underline; }
.cellc { margin: 0 3px; }
.vsep { width: 1px; height: 16px; background: #dcdcdc; margin: 0 3px; flex: none; }
.vs-a { margin: 0 2px; }
.ms { margin: 0 5px; }
.tiny { font: 8px "Noto Sans", sans-serif; fill: #bbb; }
.pcol { display: flex; padding: 0 0 0 11px; width: 156px; }
.pcol .frow:first-child { margin-top: 2px; }
.col-para { margin-left: 0; }
.gallery {
  display: flex; width: 110px; height: 50px; margin: 6px 0 0 9px;
  background: #fff; border: 1px solid #d3d3d3;
}
.shapes { width: 96px; height: 48px; }
.gal-scroll { width: 12px; margin-left: auto; display: flex; flex-direction: column; border-left: 1px solid #d3d3d3; }
.gs { flex: 1; text-align: center; font-size: 7px; line-height: 15px; color: #555; }
.gs.up { background: #dedede; color: #bbb; }
.col-draw { margin-left: 9px; }
.col-edit { flex-direction: column; padding-left: 10px; }
.ab { font: 6px "Noto Sans", sans-serif; fill: #2f6fb5; }
.addin { flex-direction: column; align-items: center; line-height: 12px; }
.dot {
  width: 8px; height: 8px; border-radius: 50%; margin: 12px 0 12px;
  background: #f58d1f; box-shadow: 0 0 3px 1px rgba(250,190,90,.7);
}
.rtail { flex: 1; display: flex; justify-content: flex-end; align-items: flex-end; padding: 0 8px 3px 0; }
.collapse { width: 10px; height: 6px; }

/* workspace */
.workspace { flex: 1; min-height: 0; display: flex; background: #e6e6e6; }
.pane { width: 167px; flex: none; overflow: hidden; }
.thumbs { list-style: none; margin: -32.2px 0 0; padding: 0; display: flex; flex-direction: column; gap: 17.3px; }
.titem { display: flex; height: 62px; flex: none; }
.num { width: 38px; flex: none; padding-left: 4px; margin-top: -6px; font-size: 14px; line-height: 18px; color: #444; font-family: "Open Sans", sans-serif; }
.thumb { width: 110px; height: 62px; background: #fff; box-shadow: 0 0 1px rgba(0,0,0,.25); }
.current .num { color: #c2504d; }
.current .thumb { outline: 2px solid #7b1a2b; }
.mini { fill: none; stroke: #a8a8a8; stroke-width: .45; }
.tn { font: 700 5px "Liberation Sans", sans-serif; fill: #222; }
.vscroll { width: 14px; flex: none; background: #f0f0f0; display: flex; flex-direction: column; align-items: center; padding-top: 2px; }
.vscroll.right { margin-left: auto; }
.sbtn { width: 12px; height: 12px; flex: none; background: #fff; border: 1px solid #d5d5d5; font-size: 7px; line-height: 10px; text-align: center; color: #222; }
.sthumb { width: 13px; flex: none; background: #fff; border: 1px solid #c8c8c8; }
.st-left { height: 18px; margin-top: 452px; }
.st-right { height: 14px; margin-top: 415px; }
.sbtn.end { margin-top: auto; margin-bottom: 1px; }
.left .sbtn.end { margin-top: 39px; }
.right .sbtn.end { margin-top: 35px; }
.nav { width: 10px; height: 10px; margin-top: 4px; }
.editor { flex: 1; min-width: 0; padding: 9px 0 0 87px; }
.slide { width: 915px; height: 516px; box-shadow: 0 0 3px rgba(0,0,0,.3); }

/* drawing */
.thick { fill: none; stroke: #111; stroke-width: 1.5; }
.thin { fill: none; stroke: #444; stroke-width: .7; }
.center { fill: none; stroke: #333; stroke-width: .7; stroke-dasharray: 18 3 3 3; }
.dim { fill: none; stroke: #222; stroke-width: .7; marker-start: url(#arr); marker-end: url(#arr); }
.dim-e { fill: none; stroke: #222; stroke-width: .7; marker-end: url(#arr); }
.dt { font: 8.5px "Open Sans", sans-serif; fill: #333; }
.badge-r { filter: drop-shadow(1px 1px 1.5px rgba(0,0,0,.55)); }
.badge-t { font: 29px "Open Sans", sans-serif; fill: #fff; letter-spacing: 1.2px; }
.q { font: 500 14px "Noto Sans CJK SC", sans-serif; fill: #111; letter-spacing: 1.4px; }
.q.wide { letter-spacing: 1.9px; }
.q .pct { font-size: 13px; letter-spacing: -.6px; }
.vol { font: 8.6px "Open Sans", sans-serif; fill: #222; }
.inv { font: 700 8px "Open Sans", sans-serif; fill: #111; }
.score { font: 700 36px "Liberation Sans", sans-serif; fill: #000; }
.red { font: italic 20px "Liberation Serif", "Noto Sans CJK SC", serif; fill: #c8102e; }
.red-l { letter-spacing: 1.3px; }

/* status */
.status {
  height: 19px; flex: none; display: flex; align-items: center;
  background: #f4f4f4; padding-left: 10px; color: #555; white-space: nowrap;
}
.s-count { width: 145px; }
.s-notes { margin-right: 12px; }
.s-lang { width: 99px; }
.s-acc { margin-right: 3px; }
.s-right { margin-left: auto; height: 100%; display: flex; align-items: center; }
.s-t { margin-left: 3px; }
.s-c { margin-left: 18px; }
.s-t2 { margin-left: 2px; margin-right: 16px; }
.view { width: 34px; height: 100%; display: flex; align-items: center; justify-content: center; }
.view.on { background: #cfcfcf; }
.zminus { margin-left: 5px; width: 8px; font-size: 11px; }
.zoomtrack { position: relative; width: 84px; height: 1px; background: #777; margin-left: 3px; }
.zthumb { position: absolute; left: 34px; top: -5px; width: 3px; height: 11px; background: #555; }
.zplus { margin-left: 4px; width: 8px; font-size: 11px; }
.zpct { margin-left: 8px; width: 28px; color: #666; }
.zfit { margin-right: 6px; }

/* taskbar */
.taskbar {
  height: 33px; flex: none; display: flex; align-items: stretch;
  background: linear-gradient(90deg, #3b3b3b, #2c2c2c 60%, #242424);
}
.start { width: 41px; display: flex; align-items: center; justify-content: center; background: #333; }
.win { width: 14px; height: 14px; }
.search { width: 240px; display: flex; align-items: center; background: #f0f0f0; color: #333; font-size: 12px; padding-left: 10px; }
.mag { width: 14px; height: 14px; }
.search span { margin-left: 8px; letter-spacing: .6px; }
.pepper { width: 60px; height: 30px; margin-left: auto; margin-right: 1px; }
.apps { display: flex; }
.app { width: 41.5px; display: flex; align-items: center; justify-content: center; position: relative; }
.app.act { background: #5a5a5a; }
.app.lit::after { content: ""; position: absolute; left: 4px; right: 4px; bottom: 0; height: 2px; background: #7fb9e6; }
.sw { font: 700 9px "Liberation Sans", sans-serif; fill: #fff; }
.sw2 { font: 700 4px "Liberation Sans", sans-serif; fill: #fff; }
.pp { font: 700 10px "Liberation Sans", sans-serif; fill: #fff; }
.tray { margin-left: auto; display: flex; align-items: center; padding-right: 11px; color: #ddd; }
.tcell { width: 19.5px; display: flex; align-items: center; justify-content: center; }
.ime { font-size: 12px; }
.sg { width: 26px; margin-left: 3px; }
.sg-s { font: 700 11px "Liberation Sans", sans-serif; fill: #fff; }
.clock { width: 60px; margin-left: 4px; display: flex; flex-direction: column; align-items: center; font-size: 10.5px; line-height: 15px; font-family: "Open Sans", sans-serif; white-space: nowrap; }
.notif { width: 34px; display: flex; justify-content: center; }
```
